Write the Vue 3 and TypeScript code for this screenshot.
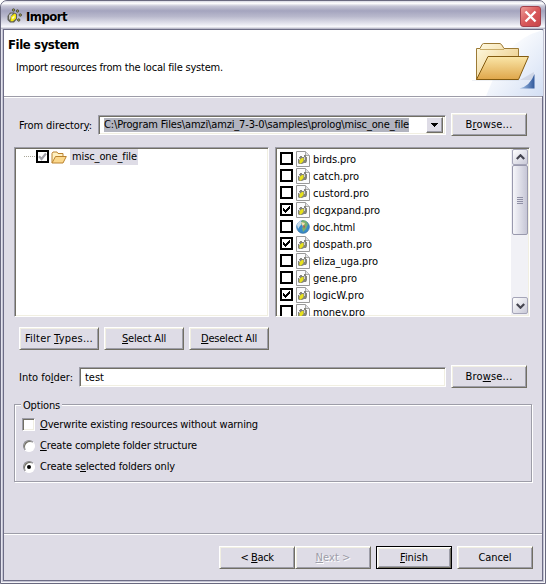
<script setup lang="ts">
import type { Directive } from 'vue'

interface FileRow { name: string; width: number; checked: boolean; html?: boolean }

const files: FileRow[] = [
  { name: 'birds.pro', width: 43, checked: false },
  { name: 'catch.pro', width: 46, checked: false },
  { name: 'custord.pro', width: 56, checked: false },
  { name: 'dcgxpand.pro', width: 67, checked: true },
  { name: 'doc.html', width: 42, checked: false, html: true },
  { name: 'dospath.pro', width: 59, checked: true },
  { name: 'eliza_uga.pro', width: 65, checked: false },
  { name: 'gene.pro', width: 44, checked: false },
  { name: 'logicW.pro', width: 51, checked: true },
  { name: 'money.pro', width: 52, checked: false },
]

// Spreads the letters of a label over a given width in pixels.
const vFit: Directive<HTMLElement, number> = {
  mounted(el, binding) {
    const length = (el.textContent ?? '').length
    const natural = el.getBoundingClientRect().width
    el.style.letterSpacing = `${(binding.value - natural) / length}px`
  },
}
</script>

<template>
  <div class="window">
    <header class="titlebar">
      <svg class="app-icon" width="16" height="16" viewBox="0 0 16 16">
        <path d="M3 4.500h4l3 1.500v5l-3 3.500H3L.500 12V8z" fill="#5f5f55" />
        <path d="M2 7l2-1.500h2L4 8l-1 4-1-1z" fill="#c9c9c4" />
        <path d="M4 8.500L7.500 5.500L9 6.500V10.500L6 13.200H3.500z" fill="#f4e80f" />
        <path d="M5 9.500L7.500 7.500V9.500L5.500 11.500z" fill="#fffcc8" />
        <g fill="#a9a545" stroke="#4d4d44">
          <circle cx="6.500" cy="2" r="1.200" /><circle cx="10.500" cy="3" r="1.200" /><circle cx="13.300" cy="7" r="1.200" /><circle cx="11.700" cy="12" r="1.200" />
        </g>
      </svg>
      <span class="title"><span v-fit="41">Import</span></span>
      <button class="close" aria-label="Close">
        <svg width="19" height="19" viewBox="0 0 19 19"><path d="M4.500 4.500l10 10M14.500 4.500l-10 10" stroke="#fff" stroke-width="2.400" /></svg>
      </button>
    </header>

    <main class="client">
      <section class="banner">
        <div class="banner-text">
          <h1><span v-fit="71">File system</span></h1>
          <p><span v-fit="207">Import resources from the local file system.</span></p>
        </div>
        <svg class="banner-art" width="75" height="66" viewBox="0 0 75 66">
          <defs>
            <linearGradient id="haze" x1="0" y1="0" x2="1" y2="1"><stop offset=".25" stop-color="#fff" /><stop offset="1" stop-color="#d3dff4" /></linearGradient>
            <linearGradient id="back" x1="0" y1="0" x2="1" y2="1"><stop offset="0" stop-color="#fffbe4" /><stop offset="1" stop-color="#e8c273" /></linearGradient>
            <linearGradient id="front" x1="0" y1="0" x2="0" y2="1"><stop offset="0" stop-color="#fae6a8" /><stop offset="1" stop-color="#dfa64a" /></linearGradient>
            <linearGradient id="corner" x1="0" y1="0" x2="1" y2="0"><stop offset="0" stop-color="#a9c6ea" /><stop offset="1" stop-color="#31599c" /></linearGradient>
          </defs>
          <path d="M75 0Q45 8 31 35L18 66H75z" fill="url(#haze)" />
          <path d="M4 50.500h47L66 42V50H4z" fill="#b9bfd0" opacity=".45" />
          <path d="M8.500 49.500V18.500h3.500l2-4 1.500-1h16.500l1.500 1 2.500 4h14.500V47z" fill="url(#back)" stroke="#9c7a35" />
          <path d="M12 19.500h24" stroke="#c9ac69" />
          <path d="M8.500 49.500L20 26.500H60.500L50.500 49.500z" fill="url(#front)" stroke="#835b10" />
          <path d="M51.500 58.500Q62 56 66.500 44V58.500z" fill="url(#corner)" />
        </svg>
      </section>

      <section class="body">
        <div class="row directory">
          <label><span v-fit="73">From director<u>y</u>:</span></label>
          <div class="combo">
            <span class="selected"><span v-fit="305">C:\Program Files\amzi\amzi_7-3-0\samples\prolog\misc_one_file</span></span>
            <button class="drop" aria-label="Open list"><svg width="7" height="4" viewBox="0 0 7 4" shape-rendering="crispEdges"><path d="M0 0h7L3.500 4z" /></svg></button>
          </div>
          <button class="button browse"><span v-fit="47">B<u>r</u>owse...</span></button>
        </div>

        <div class="panes">
          <div class="pane tree">
            <i class="branch"></i>
            <span class="box"><svg width="9" height="9" viewBox="0 0 9 9"><path d="M1 4.200L3.500 7L8 1.500" fill="none" stroke="#a2a2aa" stroke-width="2.200" /></svg></span>
            <svg class="folder" width="16" height="13" viewBox="0 0 16 13">
              <path d="M1 12V2.500L2 1h4l1 1.500h5V5" fill="#fff0c0" stroke="#bb8330" />
              <path d="M1 12L4.500 5.500H15.300L12 12z" fill="#fbd88c" stroke="#bb8330" />
            </svg>
            <span class="node"><span v-fit="65">misc_one_file</span></span>
          </div>

          <div class="pane list">
            <ul>
              <li v-for="file in files" :key="file.name">
                <span class="box"><svg v-if="file.checked" width="9" height="9" viewBox="0 0 9 9" shape-rendering="crispEdges"><path d="M1 3h1v1h1v1h1V4h1V3h1V2h1V1h1v3H7v1H6v1H5v1H4v1H3V7H2V6H1z" /></svg></span>
                <svg v-if="file.html" class="file-icon" width="14" height="16" viewBox="0 0 14 16">
                  <circle cx="7" cy="8" r="6.300" fill="#388ac8" stroke="#3874a4" stroke-width=".8" />
                  <path d="M1 6q1-4 4-4l1 3-2 2-2 3z" fill="#c4d9e9" />
                  <path d="M6 1l4 1 2 3-2 5-3 3-1-4 2-2-3-2z" fill="#78b070" />
                  <path d="M5 3l4 1-2 4z" fill="#f2dfb0" />
                  <path d="M7 6l2 1-1 3z" fill="#c4513b" />
                </svg>
                <svg v-else class="file-icon" width="14" height="16" viewBox="0 0 14 16">
                  <path d="M.5 .5h9l4 4v11H.5z" fill="#fbfbfc" stroke="#999" />
                  <path d="M9.500 .5v4h4" fill="#e2e2e5" stroke="#aaa" />
                  <path d="M4 5h2v1h2V4h2v2h1v4l-1 2H8l-2 1H3l-1-1V8h1V6h1z" fill="#85857c" />
                  <path d="M3.500 9L6 7h1.500v3L5 12.500H3.500z" fill="#e8e21b" />
                  <path d="M8 6h1v3H8zM3 7h1v2H3z" fill="#d0d0d4" />
                </svg>
                <span v-fit="file.width" class="name">{{ file.name }}</span>
              </li>
            </ul>
            <div class="scrollbar">
              <span class="arrow up"><svg width="9" height="6" viewBox="0 0 9 6"><path d="M.8 5L4.500 1.300L8.200 5" /></svg></span>
              <span class="thumb"><i></i><i></i><i></i><i></i></span>
              <span class="arrow down"><svg width="9" height="6" viewBox="0 0 9 6"><path d="M.8 1L4.500 4.700L8.200 1" /></svg></span>
            </div>
          </div>
        </div>

        <div class="row tools">
          <button class="button"><span v-fit="68">Filter <u>T</u>ypes...</span></button>
          <button class="button"><span v-fit="44"><u>S</u>elect All</span></button>
          <button class="button"><span v-fit="56"><u>D</u>eselect All</span></button>
        </div>

        <div class="row target">
          <label><span v-fit="54">Into fo<u>l</u>der:</span></label>
          <div class="field"><span v-fit="19">test</span></div>
          <button class="button browse"><span v-fit="47">Bro<u>w</u>se...</span></button>
        </div>

        <div class="options">
          <span class="legend"><span v-fit="37">Options</span></span>
          <div class="option"><i class="check"></i><span v-fit="218"><u>O</u>verwrite existing resources without warning</span></div>
          <div class="option"><i class="radio"></i><span v-fit="157"><u>C</u>reate complete folder structure</span></div>
          <div class="option"><i class="radio on"></i><span v-fit="135">Create s<u>e</u>lected folders only</span></div>
        </div>
      </section>

      <footer>
        <button class="button"><span v-fit="33">&lt; <u>B</u>ack</span></button>
        <button class="button disabled"><span v-fit="35"><u>N</u>ext &gt;</span></button>
        <button class="button default"><span v-fit="28"><u>F</u>inish</span></button>
        <button class="button"><span v-fit="33">Cancel</span></button>
      </footer>
    </main>
  </div>
</template>

<style>
body { margin: 0; background: #fff; }
</style>

<style scoped>
* { box-sizing: border-box; }
.window {
  width: 546px; height: 584px; display: flex; flex-direction: column;
  border: 1px solid #69697f; border-radius: 7px 7px 0 0;
  background: #c4c4d4; box-shadow: inset -1px -1px #f4f4f8, inset 1px 0 #e4e4ee;
  color: #000; overflow: hidden;
  font: 11px/14px "DejaVu Sans Condensed", "DejaVu Sans", sans-serif; font-stretch: condensed;
  white-space: nowrap;
}
button { font: inherit; color: inherit; padding: 0; margin: 0; }
u { text-decoration: underline; text-decoration-thickness: 1px; text-underline-offset: 1px; }
.titlebar {
  height: 28px; flex: none; display: flex; align-items: center; padding: 2px 4px 0 6px;
  background: linear-gradient(#d6d6e2 0, #fff 8%, #c6c6d6 18%, #a4a4be 35%, #b8b8cc 55%, #e2e2ec 80%, #f8f8fc 92%, #a9a9bb 100%);
}
.app-icon { display: block; }
.title { margin-left: 3px; font-size: 13px; font-weight: bold; line-height: 18px; text-shadow: 1px 1px #d8d8e2; padding-top: 2px; }
.close {
  margin-left: auto; width: 21px; height: 21px; border: 1px solid #a3414c; border-radius: 3px;
  background: linear-gradient(135deg, #ec9b97, #d9595b 50%, #c84649); display: grid; place-items: center;
}
.client {
  flex: 1; min-height: 0; margin: 0 2px 2px; border: 1px solid #6d6d86; background: #dedce6;
  display: flex; flex-direction: column;
}
.banner { height: 67px; flex: none; background: #fff; border-bottom: 1px solid #9d9ca8; display: flex; justify-content: space-between; }
.banner-text { padding: 6px 0 0 4px; }
h1 { margin: 0; font-size: 13px; line-height: 18px; }
p { margin: 7px 0 0 8px; }
.banner-art { display: block; margin-right: -1px; }
.body { flex: 1; padding: 15px 8px 0 10px; border-top: 1px solid #fff; }
.row { display: flex; align-items: center; }
.button {
  height: 23px; display: grid; place-items: center; background: #dedce6;
  border: 1px solid; border-color: #fff #716f64 #716f64 #fff;
  box-shadow: inset 1px 1px #f1efe2, inset -1px -1px #9d9da8;
}
.browse { width: 76px; }
.row label { padding-top: 2px; }
.directory { height: 23px; padding-left: 5px; }
.directory label { width: 79px; }
.combo, .field {
  height: 20px; background: #fff; border: 1px solid; border-color: #9d9da8 #fff #fff #9d9da8;
  box-shadow: inset 1px 1px #716f64, inset -1px -1px #f1efe2;
}
.combo { width: 348px; margin-right: 5px; display: flex; align-items: center; justify-content: space-between; padding: 2px 2px 2px 5px; }
.selected { background: #b2b4bf; height: 14px; line-height: 14px; width: 305px; }
.drop {
  width: 17px; height: 16px; display: grid; place-items: center; background: #dedce6;
  border: 1px solid; border-color: #fff #716f64 #716f64 #fff; box-shadow: inset -1px -1px #9d9da8;
}
.panes { display: flex; gap: 6px; margin-top: 11px; }
.pane {
  flex: none; width: 255px; height: 170px; background: #fff; border: 1px solid; border-color: #9d9da8 #fff #fff #9d9da8;
  box-shadow: inset 1px 1px #716f64, inset -1px -1px #f1efe2; overflow: hidden;
}
.tree { display: flex; align-items: flex-start; padding: 1px 0 0 9px; }
.branch { width: 12px; height: 1px; margin-top: 7px; background: repeating-linear-gradient(90deg, #aaa798 0 1px, #fff 1px 2px); }
.box { width: 13px; height: 13px; border: 2px solid #000; background: #fff; display: block; flex: none; }
.box svg { display: block; }
.tree .box { margin-top: 1px; }
.folder { margin: 2px 0 0 2px; }
.node { background: #dedce6; margin-left: 3px; padding: 0 2px; height: 16px; line-height: 16px; width: 68px; }
.list { display: flex; justify-content: space-between; padding: 1px 1px 1px 4px; }
ul { list-style: none; margin: 0; padding: 1px 0 0; }
li { height: 17px; display: flex; align-items: center; }
.file-icon { display: block; margin: 0 3px 0 3px; }
.name { line-height: 17px; padding-top: 2px; }
.scrollbar { width: 17px; display: flex; flex-direction: column; background: #f1f1f6; padding: 0 0 1px 1px; }
.arrow {
  height: 17px; flex: none; display: grid; place-items: center; border: 1px solid #a5a5b8; border-radius: 2px;
  background: linear-gradient(135deg, #fff, #c9c9d8);
}
.arrow path { fill: none; stroke: #44444f; stroke-width: 2.200; }
.up { height: 16px; }
.down { margin-top: auto; }
.thumb {
  height: 70px; flex: none; border: 1px solid #9999ad; border-radius: 2px; background: linear-gradient(90deg, #f6f6fa, #c6c6d6);
  display: flex; flex-direction: column; align-items: center; justify-content: center; gap: 1px;
}
.thumb i { width: 6px; height: 1px; background: #8f8fa5; }
.tools { gap: 5px; margin: 10px 0 0 5px; }
.tools .button { width: 80px; }
.target { margin-top: 15px; padding-left: 5px; }
.target label { width: 60px; }
.field { width: 367px; margin-right: 5px; padding: 3px 5px 0; }
.options { margin-top: 16px; width: 518px; height: 78px; border: 1px solid #9d9da8; box-shadow: 1px 1px #fff, inset 1px 1px #fff; padding: 0 0 0 7px; }
.legend { display: block; width: 41px; height: 14px; margin: -7px 0 2px -1px; padding: 1px 0 0 2px; background: #dedce6; }
.option { height: 21px; display: flex; align-items: center; }
.check { width: 13px; height: 13px; margin-right: 5px; background: #fff; border: 1px solid; border-color: #9d9da8 #fff #fff #9d9da8; box-shadow: inset 1px 1px #716f64, inset -1px -1px #f1efe2; }
.radio {
  width: 12px; height: 12px; margin: 0 5px 0 1px; border-radius: 50%; background: #fff;
  border: 1px solid; border-color: #85858a #fff #fff #85858a; box-shadow: inset 1px 1px #716f64; display: grid; place-items: center;
}
.on::after { content: ""; width: 4px; height: 4px; border-radius: 50%; background: #000; }
footer { height: 47px; flex: none; border-top: 1px solid #9d9da8; box-shadow: inset 0 1px #fff; display: flex; justify-content: flex-end; align-items: flex-start; padding: 12px 9px 0 0; }
footer .button { width: 76px; }
.disabled { color: #9d9da8; text-shadow: 1px 1px #fff; }
.default { margin: 0 5px; border-color: #000; box-shadow: inset 1px 1px #fff, inset -1px -1px #716f64, inset 2px 2px #f1efe2, inset -2px -2px #9d9da8; }
</style>
